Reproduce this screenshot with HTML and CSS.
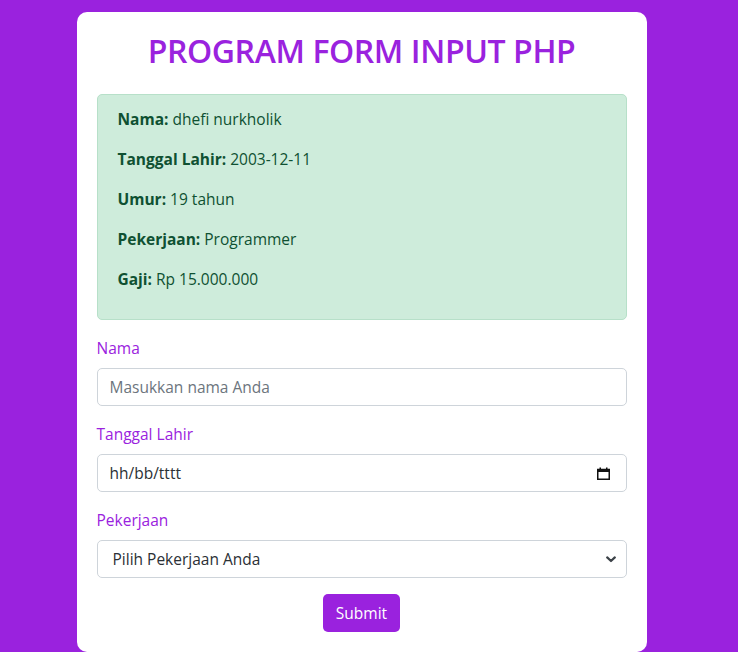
FILE: index.html
```html
<!DOCTYPE html>
<html lang="id">
<head>
<meta charset="utf-8">
<title>Program Form Input PHP</title>
<link rel="stylesheet" href="styles.css">
</head>
<body>
<div class="page">
  <main class="card">
    <h1 class="title">PROGRAM FORM INPUT PHP</h1>
    <div class="alert">
      <p><strong>Nama:</strong> dhefi nurkholik</p>
      <p><strong>Tanggal Lahir:</strong> 2003-12-11</p>
      <p><strong>Umur:</strong> 19 tahun</p>
      <p><strong>Pekerjaan:</strong> Programmer</p>
      <p><strong>Gaji:</strong> Rp 15.000.000</p>
    </div>
    <form class="form">
      <div class="field">
        <label class="label" for="nama">Nama</label>
        <input class="control" id="nama" type="text" placeholder="Masukkan nama Anda">
      </div>
      <div class="field">
        <label class="label">Tanggal Lahir</label>
        <div class="control date">
          <span>hh/bb/tttt</span>
          <svg class="cal" width="13" height="13" viewBox="0 0 13 13"><rect x="0.75" y="2.5" width="11.5" height="9.75" fill="none" stroke="#111" stroke-width="1.5"/><rect x="0.75" y="2" width="11.5" height="3" fill="#111"/><rect x="2.5" y="0.5" width="1.5" height="2" fill="#111"/><rect x="9" y="0.5" width="1.5" height="2" fill="#111"/></svg>
        </div>
      </div>
      <div class="field">
        <label class="label" for="pekerjaan">Pekerjaan</label>
        <div class="select-wrap">
          <select class="control select" id="pekerjaan">
            <option>Pilih Pekerjaan Anda</option>
            <option>Programmer</option>
          </select>
          <svg class="chev" width="10" height="7" viewBox="0 0 10 7"><path d="M1.2 1.4 L5 5 L8.8 1.4" fill="none" stroke="#3c4248" stroke-width="2.2" stroke-linecap="round" stroke-linejoin="round"/></svg>
        </div>
      </div>
      <div class="actions">
        <button type="button" class="btn">Submit</button>
      </div>
    </form>
  </main>
</div>
</body>
</html>
```

FILE: styles.css
```css
* { box-sizing: border-box; }
html, body { margin: 0; padding: 0; }
body {
  background: #9a22de;
  font-family: "Open Sans", "Noto Sans", sans-serif;
  font-size: 16px;
  line-height: 24px;
  color: #212529;
  height: 652px;
  overflow: hidden;
}
.page { width: 723px; padding-top: 12px; }
.card {
  width: 570px;
  margin: 0 auto;
  background: #fff;
  border-radius: 10px;
  padding: 20px 20px 20px;
}
.title {
  margin: 0 0 24px;
  text-align: center;
  color: #9a22de;
  font-size: 32px;
  font-weight: 600;
  line-height: 38px;
  letter-spacing: -0.4px;
}
.alert {
  background: #ceecdb;
  border: 1px solid #b7e0c9;
  border-radius: 5px;
  color: #0f5132;
  padding: 12px 20px;
  margin-bottom: 16px;
}
.alert p { margin: 0 0 16px; font-size: 15.5px; line-height: 24px; }
.alert strong { font-weight: 700; }
.field { margin-bottom: 16px; }
.label {
  display: block;
  color: #9a22de;
  margin-bottom: 8px;
  font-size: 15.5px;
  line-height: 24px;
}
.control {
  display: block;
  width: 100%;
  height: 38px;
  border: 1px solid #ced4da;
  border-radius: 5px;
  background: #fff;
  padding: 6px 12px;
  font-family: inherit;
  font-size: 15.5px;
  line-height: 24px;
  color: #212529;
}
.control::placeholder { color: #6c757d; }
.date { display: flex; align-items: center; justify-content: space-between; padding-right: 16px; color: #2b3035; }
.select-wrap { position: relative; }
.select { appearance: none; -webkit-appearance: none; padding-left: 15px; padding-right: 36px; color: #2b3035; }
.chev { position: absolute; right: 11px; top: 16px; pointer-events: none; }
.actions { display: flex; justify-content: center; }
.btn {
  background: #9a22de;
  color: #fff;
  border: none;
  border-radius: 5px;
  height: 38px;
  padding: 6px 13px;
  font-family: inherit;
  font-size: 15.5px;
  line-height: 24px;
}
```
